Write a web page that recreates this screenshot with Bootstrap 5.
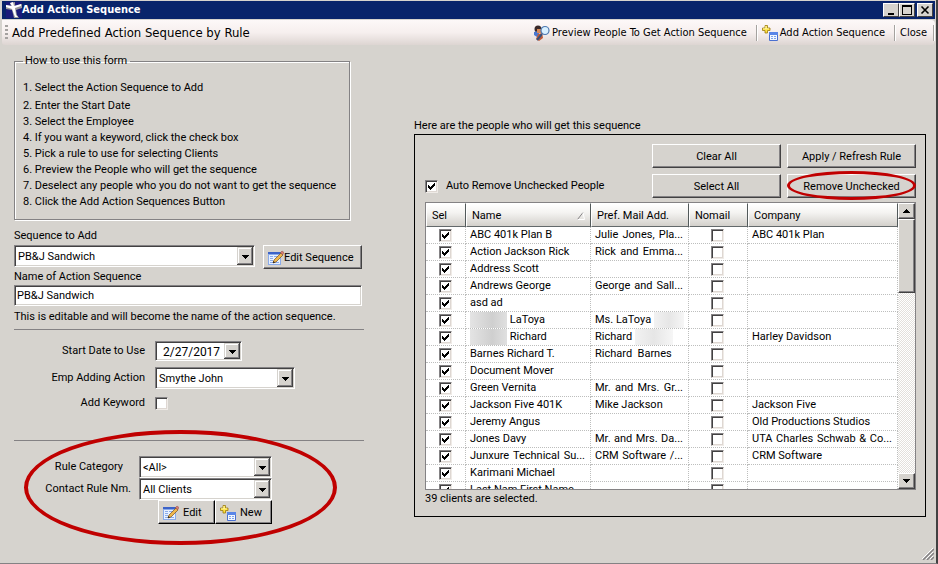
<!DOCTYPE html>
<html lang="en">
<head>
<meta charset="utf-8">
<meta name="viewport" content="width=device-width, initial-scale=1">
<title>Add Action Sequence</title>
<link href="https://cdn.jsdelivr.net/npm/bootstrap@5.3.0/dist/css/bootstrap.min.css" rel="stylesheet">
<style>
  :root { --face: #d6d3ce; --shade: #848284; --dark: #424142; --red: #c00000; }
  body { background: var(--face); color: #000; font: 11px/16px Roboto, "Liberation Sans", Arial, sans-serif; }
  .app-window { min-height: 100vh; padding: 1px 1px 0 2px; border-right: 2px solid var(--dark); border-bottom: 1px solid var(--shade); }
  .title-strip { background: #08246b; color: #fff; height: 18px; padding-right: 2px; font: bold 11px/18px "DejaVu Sans Condensed", "DejaVu Sans", sans-serif; }
  .tools { height: 25px; margin-top: 1px; padding: 0 1px 0 3px; background: linear-gradient(#fdf8f8, #f6efee 50%, #ddd5d2); border-radius: 0 4px 4px 3px; font: 11px/16px "DejaVu Sans Condensed", "DejaVu Sans", sans-serif; }
  .tools-title { font-size: 13px; }
  .grip { width: 3px; height: 15px; background: repeating-linear-gradient(#a5a2a0 0 2px, transparent 2px 4px); }
  .divider { width: 1px; height: 16px; background: #a5a29f; box-shadow: 1px 0 #fff; margin: 0 5px 0 9px; }
  .divider-end { margin: 0 0 0 6px; }
  .tool-btn { border: 0; padding: 0; background: none; color: #000; line-height: 16px; gap: 2px; }
  .win-btn { width: 16px; height: 14px; padding: 0; background: var(--face); border: 1px solid; border-color: #fff var(--dark) var(--dark) #fff; line-height: 0; border-radius: 0; }
  .win-close { margin-left: 2px; }
  .main-area { padding: 13px 9px 0 12px; column-gap: 50px; }
  .left-side { flex: 0 0 350px; }
  .right-side { flex: 1 1 0; min-width: 0; padding-top: 60px; }
  .steps-box { border: 1px solid var(--shade); box-shadow: 1px 1px #fff, inset 1px 1px #fff; padding: 0 8px 10px; margin: -5px 14px 0 0; height: 167px; }
  .steps-box legend { float: none; width: auto; margin: 0 0 11px 0; padding: 0 3px 0 2px; font-size: 11px; line-height: 16px; }
  .steps-box ol { list-style: none; margin: 0; padding: 0; }
  .steps-box li:first-child { margin-bottom: 2px; }
  .seq-row { padding-right: 2px; margin-top: 1px; }
  .name-note { margin: 3px 0 4px; }
  .rule-line { border: 0; height: 1px; background: var(--shade); opacity: 1; margin: 0; }
  .sunk, .drop { border: 1px solid; border-color: var(--shade) #fff #fff var(--shade); box-shadow: inset 1px 1px var(--dark), inset -1px -1px var(--face); background-color: #fff; color: #000; font: inherit; border-radius: 0; padding: 1px 3px 0; height: 22px; min-width: 0; }
  .sunk { height: 21px; width: 348px; padding: 0 2px; }
  .drop { appearance: none; background-repeat: no-repeat; background-position: right 1px center; background-size: 16px 18px; background-image: url("data:image/svg+xml,%3Csvg xmlns='http://www.w3.org/2000/svg' viewBox='0 0 16 18' shape-rendering='crispEdges' preserveAspectRatio='none'%3E%3Cpath fill='%23424142' d='M0 0h16v18H0z'/%3E%3Cpath fill='%23d6d3ce' d='M0 0h15v17H0z'/%3E%3Cpath fill='%23848284' d='M14 1h1v16H1v-1h13z'/%3E%3Cpath fill='%23fff' d='M1 1h13v1H2v14H1z'/%3E%3Cpath d='M5 8h7v1h-1v1h-1v1h-1v1H8v-1H7v-1H6V9H5z'/%3E%3C/svg%3E"); }
  .date-box { width: 87px; height: 20px; font-size: 12px; padding-left: 7px; background-size: 16px 16px; display: block; }
  .employee-box { width: 140px; }
  .push { background: var(--face); color: #000; border: 1px solid; border-color: #fff var(--dark) var(--dark) #fff; box-shadow: inset -1px -1px var(--shade); border-radius: 0; font: inherit; line-height: 16px; padding: 1px 4px 0; height: 24px; }
  .push-edit { width: 99px; }
  .push-dark { border-color: #fff #000 #000 #fff; width: 57px; }
  .tick { appearance: none; flex: none; display: block; width: 13px; height: 13px; margin: 0; background: #fff center/9px 9px no-repeat; border: 1px solid; border-color: var(--shade) #efebe7 #efebe7 var(--shade); box-shadow: inset 1px 1px var(--dark), inset -1px -1px #ded7d2; }
  .tick:checked { background-image: url("data:image/svg+xml,%3Csvg xmlns='http://www.w3.org/2000/svg' viewBox='0 0 9 9' shape-rendering='crispEdges'%3E%3Cpath d='M1 3h1v1h1v1h1V4h1V3h1V2h1V1h1v3H7v1H6v1H5v1H4v1H3V7H2V6H1z'/%3E%3C/svg%3E"); }
  .dates { display: grid; grid-template-columns: 131px 1fr; column-gap: 10px; row-gap: 6px; padding: 11px 0 29px; align-items: center; }
  .rules { display: grid; grid-template-columns: 117px 133px; column-gap: 8px; padding: 15px 0 0; position: relative; align-items: center; }
  .ring { position: absolute; pointer-events: none; border: 4px solid var(--red); border-radius: 50%; }
  .ring-rules { left: 10px; top: -11px; width: 313px; height: 115px; }
  .ring-remove { left: 0; right: 0; top: -3px; height: 29px; border-width: 3px; }
  .people { border: 1px solid #000; padding: 9px 9px 9px 10px; }
  .actions { display: grid; grid-template-columns: 1fr 129px 129px; column-gap: 6px; row-gap: 6px; }
  .grid-frame { height: 288px; border: 1px solid var(--shade); background: #fff; margin: 4px 0 1px; }
  .grid-clip { overflow: hidden; flex: 1 1 0; min-width: 0; }
  .people-grid { width: 100%; table-layout: fixed; border-collapse: separate; border-spacing: 0; }
  .people-grid th { height: 24px; font-weight: normal; padding: 1px 5px 0; background: linear-gradient(#fff, #f4f3f1 40%, #d3d0cb); border: 1px solid; border-color: #fff #52595a #63696b #fff; white-space: nowrap; }
  .people-grid td { height: 17px; line-height: 16px; padding: 0 5px 0 4px; border: 0 dotted #bdbebd; border-width: 0 1px 1px 0; white-space: nowrap; overflow: hidden; }
  .people-grid .fill-row { text-align-last: justify; }
  .people-grid .tick { margin: 0 auto; }
  .hidden-name { display: inline-block; height: 16px; vertical-align: top; background: linear-gradient(90deg, #e4e4e4, #cfcfcf 60%, #e0e0e0); }
  .hidden-soft { background: linear-gradient(90deg, #f2f2f2, #e6e6e6 50%, #f6f6f6); }
  .scroller { width: 17px; background: repeating-conic-gradient(#fff 0 25%, #e3e0dc 0 50%) 0 0/2px 2px; }
  .scroll-end { width: 17px; height: 16px; padding: 0; line-height: 0; background: var(--face); border: 1px solid; border-color: #fff var(--dark) var(--dark) #fff; box-shadow: inset -1px -1px var(--shade); }
  .scroll-thumb { height: 74px; }
  .resize-grip { position: fixed; right: 4px; bottom: 4px; }
</style>
<script src="https://cdn.jsdelivr.net/npm/bootstrap@5.3.0/dist/js/bootstrap.bundle.min.js"></script>
</head>
<body>
<svg class="d-none" aria-hidden="true">
  <symbol id="edit-form" viewBox="0 0 16 16">
    <path fill="#8aabea" d="M0 2h13v13H0z"/><path fill="#e8f1ff" d="M1 5h11v9H1z"/><path fill="#3c63c8" d="M0 2h13v2H0z"/>
    <path stroke="#8aabea" d="M2 6.500h3M6 6.500h4M2 8.500h3M2 10.500h3M2 12.500h3M7 12.500h4"/>
    <path fill="#f0b84c" stroke="#79501e" stroke-width=".7" d="M6 10l7-7 2 2-7 7-3 1z"/><path fill="#d87c76" stroke="#8c4a3a" stroke-width=".5" d="M12.500 2.500L14 1l2 1.500L14.500 5z"/><path fill="#111" d="M5 13l.6-2L7 12.400z"/>
  </symbol>
  <symbol id="add-form" viewBox="0 0 16 16">
    <path fill="#ffe23a" stroke="#9a7a10" stroke-width=".8" d="M3 .5h2.500V3H8v2.500H5.500V8H3V5.500H.5V3H3z"/>
    <path fill="#fff9b0" d="M3.500 1h1v2.500H7v.8H1v-.8h2.500z"/>
    <path fill="#f2f7ff" stroke="#4a6fd0" d="M7.500 7.500h8v8h-8z"/><path fill="#5a86e8" d="M7 7h9v3H7z"/><path stroke="#7fa3ea" d="M9 11.500h2M12 11.500h2M9 13.500h2M12 13.500h2"/>
  </symbol>
</svg>
<div class="app-window d-flex flex-column">
  <header class="title-strip d-flex align-items-center">
    <svg class="ms-1 flex-shrink-0" width="16" height="16" viewBox="0 0 16 16" aria-hidden="true"><path fill="#1a1a7a" d="M0 0h16v16H0z"/><path fill="#9a9a9a" d="M4 1l5-1v4l7-2v4l-6 2 1 5 2 3H8L6 8 0 7V3l5 1z"/><path fill="#fff" d="M4 1l3-1 1 4 7-2v2L9 6l1 7 2 2H9L6 7 0 5V3l6 1z"/></svg>
    <span>Add Action Sequence</span>
    <div class="ms-auto d-flex">
      <button class="win-btn" aria-label="Minimize"><svg width="12" height="10" shape-rendering="crispEdges"><path d="M3 8h6v2H3z"/></svg></button>
      <button class="win-btn" aria-label="Maximize"><svg width="12" height="10" shape-rendering="crispEdges"><path fill-rule="evenodd" d="M1 0h10v10H1zM2 2v7h8V2z"/></svg></button>
      <button class="win-btn win-close" aria-label="Close window"><svg width="12" height="10"><path stroke="#000" stroke-width="1.600" d="M2.500 1.500l7 7M9.500 1.500l-7 7"/></svg></button>
    </div>
  </header>
  <nav class="tools d-flex align-items-center">
    <span class="grip"></span>
    <span class="tools-title ms-1">Add Predefined Action Sequence by Rule</span>
    <div class="ms-auto d-flex align-items-center">
      <button class="tool-btn d-flex align-items-center">
        <svg width="16" height="16" viewBox="0 0 16 16" aria-hidden="true"><circle cx="4" cy="4" r="3.500" fill="#3a2a2a"/><path fill="#4a78d0" d="M0 7l4-1 2 5-3 1-3-2z"/><path fill="#d88a5a" d="M3 4h4v4H3z"/><path fill="#c05a38" d="M4 9l4-1 1 5-4 3-3-2z"/><path stroke="#36507a" stroke-width="2" d="M8 9l-5 6"/><circle cx="11" cy="5.500" r="4" fill="#d8f0ff" stroke="#4c78b0" stroke-width="1.200"/></svg>Preview People To Get Action Sequence</button>
      <span class="divider"></span>
      <button class="tool-btn d-flex align-items-center"><svg width="16" height="16" aria-hidden="true"><use href="#add-form"/></svg>Add Action Sequence</button>
      <span class="divider"></span>
      <button class="tool-btn">Close</button>
      <span class="divider divider-end"></span>
    </div>
  </nav>
  <main class="main-area d-flex">
    <section class="left-side">
      <fieldset class="steps-box">
        <legend>How to use this form</legend>
        <ol>
          <li>1. Select the Action Sequence to Add</li>
          <li>2. Enter the Start Date</li>
          <li>3. Select the Employee</li>
          <li>4. If you want a keyword, click the check box</li>
          <li>5. Pick a rule to use for selecting Clients</li>
          <li>6. Preview the People who will get the sequence</li>
          <li>7. Deselect any people who you do not want to get the sequence</li>
          <li>8. Click the Add Action Sequences Button</li>
        </ol>
      </fieldset>
      <label class="d-block mt-2" for="sequence">Sequence to Add</label>
      <div class="seq-row d-flex gap-2">
        <select class="drop flex-grow-1" id="sequence"><option>PB&amp;J Sandwich</option></select>
        <button class="push push-edit d-flex align-items-center"><svg width="16" height="16" aria-hidden="true"><use href="#edit-form"/></svg>Edit Sequence</button>
      </div>
      <label class="d-block" for="seq-name">Name of Action Sequence</label>
      <input class="sunk d-block" id="seq-name" value="PB&amp;J Sandwich">
      <p class="name-note">This is editable and will become the name of the action sequence.</p>
      <hr class="rule-line">
      <div class="dates">
        <label class="text-end" for="start">Start Date to Use</label>
        <div><input class="drop date-box" id="start" value="2/27/2017"></div>
        <label class="text-end" for="employee">Emp Adding Action</label>
        <div><select class="drop employee-box d-block" id="employee"><option>Smythe John</option></select></div>
        <label class="text-end" for="keyword">Add Keyword</label>
        <div><input class="tick" type="checkbox" id="keyword"></div>
      </div>
      <hr class="rule-line">
      <div class="rules">
        <label class="text-end pe-2" for="category">Rule Category</label>
        <select class="drop" id="category"><option>&lt;All&gt;</option></select>
        <label class="text-end" for="contact-rule">Contact Rule Nm.</label>
        <select class="drop" id="contact-rule"><option>All Clients</option></select>
        <div></div>
        <div class="d-flex justify-content-end">
          <button class="push push-dark d-flex align-items-center gap-1"><svg width="16" height="16" aria-hidden="true"><use href="#edit-form"/></svg>Edit</button>
          <button class="push push-dark d-flex align-items-center gap-1"><svg width="16" height="16" aria-hidden="true"><use href="#add-form"/></svg>New</button>
        </div>
        <span class="ring ring-rules"></span>
      </div>
    </section>
    <section class="right-side">
      <div>Here are the people who will get this sequence</div>
      <div class="people">
        <div class="actions align-items-center">
          <span></span><button class="push">Clear All</button><button class="push">Apply / Refresh Rule</button>
          <div class="d-flex align-items-center gap-2"><input class="tick" type="checkbox" id="auto-remove" checked><label for="auto-remove">Auto Remove Unchecked People</label></div>
          <button class="push">Select All</button>
          <div class="position-relative d-grid"><button class="push">Remove Unchecked</button><span class="ring ring-remove"></span></div>
        </div>
        <div class="grid-frame d-flex">
          <div class="grid-clip">
            <table class="people-grid">
              <colgroup><col style="width:40px"><col style="width:125px"><col style="width:98px"><col style="width:59px"><col></colgroup>
              <thead><tr><th>Sel</th><th><span class="d-flex align-items-center justify-content-between">Name<svg width="8" height="8"><path d="M.5 7.500L6 .5" stroke="#848284"/><path d="M6 .5l1.500 7H.5" stroke="#fff" fill="none"/></svg></span></th><th>Pref. Mail Add.</th><th>Nomail</th><th>Company</th></tr></thead>
              <tbody id="rows"></tbody>
            </table>
          </div>
          <div class="scroller d-flex flex-column">
            <button class="scroll-end" aria-label="Scroll up"><svg width="7" height="4" shape-rendering="crispEdges"><path d="M3 0h1v1h1v1h1v1h1v1H0V3h1V2h1V1h1z"/></svg></button>
            <div class="scroll-end scroll-thumb"></div>
            <button class="scroll-end mt-auto" aria-label="Scroll down"><svg width="7" height="4" shape-rendering="crispEdges"><path d="M0 0h7v1H6v1H5v1H4v1H3V3H2V2H1V1H0z"/></svg></button>
          </div>
        </div>
        <div>39 clients are selected.</div>
      </div>
    </section>
  </main>
</div>
<svg class="resize-grip" width="12" height="12" aria-hidden="true"><path stroke="#fff" stroke-width="1" d="M0 11L11 0M4 11l7-7M8 11l3-3"/><path stroke="#848284" stroke-width="1.500" d="M1 12L12 1M5 12l7-7M9 12l3-3"/></svg>
<script>
  const mask = (w, soft) => `<span class="hidden-name${soft ? ' hidden-soft' : ''}" style="width:${w}px"></span>`;
  const people = [
    ['ABC 401k Plan B', 'Julie Jones, Pla...', 'ABC 401k Plan'],
    ['Action Jackson Rick', 'Rick and Emma...', ''],
    ['Address Scott', '', ''],
    ['Andrews George', 'George and Sall...', ''],
    ['asd ad', '', ''],
    [mask(37) + ' LaToya', 'Ms. LaToya ' + mask(30, true), ''],
    [mask(37) + ' Richard', 'Richard ' + mask(38, true), 'Harley Davidson'],
    ['Barnes Richard T.', 'Richard&nbsp; Barnes', ''],
    ['Document Mover', '', ''],
    ['Green Vernita', 'Mr. and Mrs. Gr...', ''],
    ['Jackson Five 401K', 'Mike Jackson', 'Jackson Five'],
    ['Jeremy Angus', '', 'Old Productions Studios'],
    ['Jones Davy', 'Mr. and Mrs. Da...', 'UTA Charles Schwab &amp; Co...'],
    ['Junxure Technical Su...', 'CRM Software /...', 'CRM Software'],
    ['Karimani Michael', '', ''],
    ['Last Nam First Name', '', '']
  ];
  const cell = t => `<td${t.endsWith('...') ? ' class="fill-row"' : ''}>${t}</td>`;
  document.getElementById('rows').innerHTML = people.map(([name, mail, company], i) =>
    `<tr><td><input class="tick" type="checkbox" aria-label="Select row ${i + 1}" checked></td>${cell(name)}${cell(mail)}<td><input class="tick" type="checkbox" aria-label="No mail row ${i + 1}"></td>${cell(company)}</tr>`).join('');
</script>
</body>
</html>
